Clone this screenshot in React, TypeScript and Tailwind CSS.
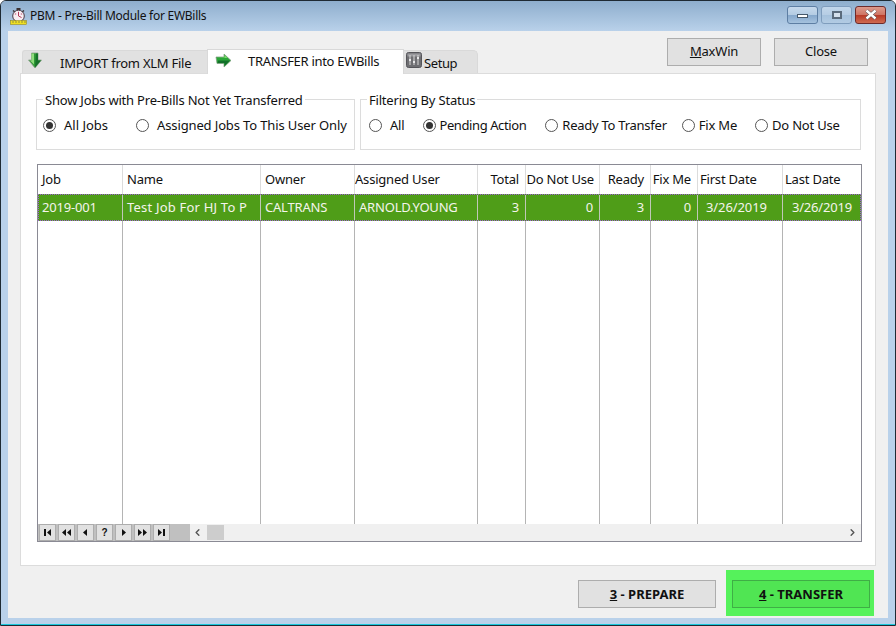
import { ChevronLeft, ChevronRight } from "lucide-react";

const FONT = "font-['Noto_Sans','Open_Sans',sans-serif]";

const columns = [
  { label: "Job", value: "2019-001", width: "w-[85px]", head: "pl-[4px]", cell: "pl-[4px]" },
  { label: "Name", value: "Test Job For HJ To P", width: "w-[138px]", head: "pl-[4px]", cell: "pl-[4px] tracking-[0.2px]" },
  { label: "Owner", value: "CALTRANS", width: "w-[94px]", head: "pl-[4px]", cell: "pl-[4px]" },
  { label: "Assigned User", value: "ARNOLD.YOUNG", width: "w-[123px]", head: "pl-[0px]", cell: "pl-[4px]" },
  { label: "Total", value: "3", width: "w-[48px]", head: "justify-end pr-[6px]", cell: "justify-end pr-[6px]" },
  { label: "Do Not Use", value: "0", width: "w-[74px]", head: "justify-end pr-[5px]", cell: "justify-end pr-[6px]" },
  { label: "Ready", value: "3", width: "w-[51px]", head: "justify-end pr-[6px]", cell: "justify-end pr-[6px]" },
  { label: "Fix Me", value: "0", width: "w-[47px]", head: "justify-end pr-[6px]", cell: "justify-end pr-[6px]" },
  { label: "First Date", value: "3/26/2019", width: "w-[85px]", head: "pl-[2px]", cell: "pl-[8px] tracking-[-0.1px]" },
  { label: "Last Date", value: "3/26/2019", width: "w-[78px]", head: "pl-[2px]", cell: "pl-[9px] tracking-[-0.2px]" },
];

function Radio({ label, checked, gap, className }: { label: string; checked?: boolean; gap: string; className: string }) {
  return (
    <div className={`flex items-center ${className}`}>
      <span className="w-[13px] h-[13px] rounded-full border border-[#555] bg-white flex items-center justify-center shrink-0">
        {checked && <span className="w-[7px] h-[7px] rounded-full bg-[#333]" />}
      </span>
      <span className={`${gap} whitespace-nowrap`}>{label}</span>
    </div>
  );
}

function GroupBox({ title, className, children }: { title: string; className: string; children: React.ReactNode }) {
  return (
    <div className={`relative h-[51px] border border-[#dcdcdc] ${className}`}>
      <span className="absolute left-[6px] -top-[8px] bg-white px-[2px] leading-[16px] whitespace-nowrap">{title}</span>
      <div className="flex items-center h-full pt-[2px]">{children}</div>
    </div>
  );
}

function Btn({ children }: { children: React.ReactNode }) {
  return (
    <div className="w-[94px] h-[28px] bg-[#e1e1e1] border border-[#adadad] flex items-center justify-center">
      {children}
    </div>
  );
}

function NavIcon({ kind }: { kind: string }) {
  const paths: Record<string, string> = {
    first: "M2 2h2v7H2z M9 2v7L5 5.5z",
    prevPage: "M5 2v7L1 5.5z M10 2v7L6 5.5z",
    prev: "M7 2v7L3 5.5z",
    next: "M4 2v7l4-3.5z",
    nextPage: "M1 2v7l4-3.5z M6 2v7l4-3.5z",
    last: "M2 2v7l4-3.5z M7 2h2v7H7z",
  };
  return (
    <span className="w-[17px] h-[17px] mr-[2px] bg-[#e1e1e1] border border-[#adadad] flex items-center justify-center">
      {kind === "help" ? (
        <span className="text-[10px] font-bold leading-none tracking-normal font-['Liberation_Sans',sans-serif]">?</span>
      ) : (
        <svg width="11" height="11" viewBox="0 0 11 11" fill="#111">
          <path d={paths[kind]} />
        </svg>
      )}
    </span>
  );
}

function ArrowDown() {
  return (
    <svg width="16" height="17" viewBox="0 0 16 17">
      <path d="M4.5 1h6.5v7h3.5L8 16 1.5 8h3z" fill="#2f9a35" stroke="#8aa08a" strokeWidth="0.8" />
      <path d="M4.5 1.5h2.5v11L3 8.5h1.5z" fill="#8fdc7c" />
      <path d="M9 1.5h2v7h3L8 15.5z" fill="#17722a" />
    </svg>
  );
}

function ArrowRight() {
  return (
    <svg width="17" height="15" viewBox="0 0 17 15">
      <path d="M1 4h8V1l7 6.5-7 6.5v-3.5H2z" fill="#2aa638" stroke="#7f9a7f" strokeWidth="0.7" />
      <path d="M1.5 4.5h8V2l3 3z" fill="#7fe06c" />
      <path d="M2.5 10h7v3l5.5-5.5H3z" fill="#12702a" />
    </svg>
  );
}

function CaptionButton({ className, children }: { className: string; children: React.ReactNode }) {
  return (
    <div className={`w-[31px] h-[18px] rounded-[3px] border flex items-center justify-center ${className}`}>
      {children}
    </div>
  );
}

export default function App() {
  return (
    <div className={`w-[896px] h-[626px] overflow-hidden flex flex-col bg-[#b9d1ea] border border-[#1e2a33] rounded-t-[6px] text-[13px] tracking-[-0.2px] text-[#111] ${FONT}`}>
      {/* Title bar */}
      <div className="h-[30px] shrink-0 flex items-center pl-[9px] pr-[9px] bg-gradient-to-b from-[#8eaecd] to-[#b9d1ea]">
        <svg width="17" height="17" viewBox="0 0 17 17" className="mr-[3px]">
          <rect x="6.5" y="0" width="4" height="2" fill="#3a3030" />
          <path d="M3 2.5l2 1.5M14 2.5l-2 1.5" stroke="#3a3030" strokeWidth="1.5" />
          <circle cx="8.5" cy="8" r="5.8" fill="#f8eef2" stroke="#4a3a44" />
          <path d="M8.5 8V3.8M8.5 8l3 1.5" stroke="#b03a5a" fill="none" />
          <circle cx="5.5" cy="6" r="0.8" fill="#c8708a" />
          <circle cx="11.5" cy="6" r="0.8" fill="#c8708a" />
          <rect x="0.5" y="12.5" width="16" height="4" fill="#f0e020" stroke="#8a7d10" strokeWidth="0.5" />
          <path d="M3 13v2M6 13v2M9 13v2M12 13v2M15 13v2" stroke="#555" strokeWidth="0.6" />
        </svg>
        <span className="text-[12px] leading-none tracking-[-0.26px]">PBM - Pre-Bill Module for EWBills</span>
        <div className="ml-auto flex items-center gap-[3px] -mt-[3px]">
          <CaptionButton className="border-[#5d7ea3] bg-[linear-gradient(#c6d9ec_0%,#b4cce3_48%,#86a8cc_52%,#a5c2de_100%)]">
            <span className="w-[11px] h-[4px] mt-[3px] bg-white border border-[#46586a]" />
          </CaptionButton>
          <CaptionButton className="border-[#7f9dbd] bg-[linear-gradient(#c2d7eb_0%,#b6cde4_48%,#a6c2dd_52%,#b2cbe3_100%)]">
            <span className="w-[10px] h-[8px] border-[2px] border-[#5a6b7c] bg-[#d4e0ec]" />
          </CaptionButton>
          <CaptionButton className="border-[#6e2a2a] bg-[linear-gradient(#dc9a8c_0%,#cf7565_48%,#b83a28_52%,#cf6a50_100%)]">
            <svg width="14" height="11" viewBox="0 0 14 11">
              <path d="M2.5 1.5l9 8M11.5 1.5l-9 8" stroke="#4a4a52" strokeWidth="3.6" />
              <path d="M2.5 1.5l9 8M11.5 1.5l-9 8" stroke="#fff" strokeWidth="2.4" />
            </svg>
          </CaptionButton>
        </div>
      </div>

      {/* Client area */}
      <div className="flex-1 mx-[7px] mb-[6px] bg-[#f0f0f0] px-[12px] flex flex-col">
        {/* Tabs and top buttons */}
        <div className="h-[42px] shrink-0 flex items-end">
          <div className="flex items-end ml-[2px]">
            <div className="w-[185px] h-[23px] bg-[#e1e1e1] border-t border-l border-[#d9d9d9] flex items-center rounded-tl-[3px]">
              <span className="ml-[4px] -mt-[4px]"><ArrowDown /></span>
              <span className="ml-[17px] pt-[3px] tracking-[-0.25px]">IMPORT from XLM File</span>
            </div>
            <div className="w-[197px] h-[25px] -mb-[1px] bg-white border-t border-x border-[#d9d9d9] relative z-10 flex items-center">
              <span className="ml-[7px] -mt-[4px]"><ArrowRight /></span>
              <span className="ml-[16px] tracking-[-0.3px]">TRANSFER into EWBills</span>
            </div>
            <div className="w-[74px] h-[23px] bg-[#e1e1e1] border-t border-r border-[#d9d9d9] flex items-center rounded-tr-[5px]">
              <svg width="16" height="16" viewBox="0 0 16 16" className="ml-[2px] -mt-[4px]">
                <rect x="0.5" y="0.5" width="15" height="15" rx="2" fill="#6e6e72" stroke="#55555a" />
                <rect x="1.5" y="1.5" width="13" height="3" fill="#9a9a9e" />
                <path d="M4 3v10M8 3v10M12 3v10" stroke="#d8d8d8" />
                <path d="M3 8h2M7 10h2M11 6h2" stroke="#fff" strokeWidth="1.5" />
              </svg>
              <span className="ml-[2px] pt-[3px] tracking-[-0.4px]">Setup</span>
            </div>
          </div>
          <div className="ml-auto self-start mt-[7px] mr-[8px] flex gap-[13px]">
            <Btn><span><span className="underline">M</span>axWin</span></Btn>
            <Btn>Close</Btn>
          </div>
        </div>

        {/* Tab panel */}
        <div className="h-[493px] shrink-0 bg-white border border-[#dcdcdc] pl-[15px] pr-[9px] pt-[25px]">
          <div className="flex gap-[5px]">
            <GroupBox title="Show Jobs with Pre-Bills Not Yet Transferred" className="w-[319px]">
              <Radio label="All Jobs" checked gap="ml-[8px] tracking-[0px]" className="ml-[6px]" />
              <Radio label="Assigned Jobs To This User Only" gap="ml-[8px] tracking-[-0.13px]" className="ml-[28px]" />
            </GroupBox>
            <GroupBox title="Filtering By Status" className="w-[501px]">
              <Radio label="All" gap="ml-[8px]" className="ml-[8px]" />
              <Radio label="Pending Action" checked gap="ml-[3px] tracking-[-0.4px]" className="ml-[19px]" />
              <Radio label="Ready To Transfer" gap="ml-[4px] tracking-[-0.25px]" className="ml-[19px]" />
              <Radio label="Fix Me" gap="ml-[4px]" className="ml-[15px]" />
              <Radio label="Do Not Use" gap="ml-[4px]" className="ml-[18px]" />
            </GroupBox>
          </div>

          {/* Grid */}
          <div className="mt-[14px] w-[825px] h-[378px] border border-[#8a8a94] ml-[1px] flex flex-col">
            <div className="flex h-[29px] shrink-0">
              {columns.map((c) => (
                <div key={c.label} className={`${c.width} shrink-0 border-r border-[#dcdcdc] last:border-r-0 flex items-center whitespace-nowrap ${c.head}`}>
                  {c.label}
                </div>
              ))}
            </div>
            <div className="flex h-[27px] shrink-0 bg-[#4f9d18] text-[#f4f4ec] border border-dotted border-[#a05ad8]">
              {columns.map((c, i) => (
                <div key={c.label} className={`${c.width} ${i === 0 ? "-ml-[1px]" : ""} shrink-0 border-r border-[#c0c8b8] last:border-r-0 flex items-center whitespace-nowrap ${c.cell}`}>
                  {c.value}
                </div>
              ))}
            </div>
            <div className="flex flex-1">
              {columns.map((c) => (
                <div key={c.label} className={`${c.width} shrink-0 border-r border-[#b4b4b4] last:border-r-0`} />
              ))}
            </div>
            {/* Navigator and scrollbar */}
            <div className="flex h-[17px] shrink-0 bg-[#f0f0f0]">
              <div className="w-[152px] bg-[#c0c0c0] flex items-center pl-[1px]">
                {["first", "prevPage", "prev", "help", "next", "nextPage", "last"].map((k) => (
                  <NavIcon key={k} kind={k} />
                ))}
              </div>
              <div className="flex-1 flex items-center">
                <ChevronLeft size={11} strokeWidth={3} className="ml-[2px] text-[#555]" />
                <span className="w-[17px] h-[15px] ml-[4px] bg-[#cdcdcd]" />
                <ChevronRight size={11} strokeWidth={3} className="ml-auto mr-[3px] text-[#555]" />
              </div>
            </div>
          </div>
        </div>

        {/* Bottom actions */}
        <div className="flex-1 flex justify-end items-start pt-[4px] mr-[2px] font-bold tracking-normal">
          <div className="w-[138px] h-[28px] mt-[10px] mr-[10px] bg-[#e1e1e1] border border-[#adadad] flex items-center justify-center whitespace-nowrap">
            <span className="pt-[1px]"><span className="underline">3</span> - PREPARE</span>
          </div>
          <div className="w-[148px] h-[46px] bg-[#55f25b] pl-[6px] pt-[10px]">
            <div className="w-[138px] h-[28px] bg-[#50e553] border border-[#3fae46] flex items-center justify-center whitespace-nowrap">
              <span className="pt-[1px]"><span className="underline">4</span> - TRANSFER</span>
            </div>
          </div>
        </div>
      </div>
      <div className="h-[1px] shrink-0 bg-[#18c8dc]" />
    </div>
  );
}
